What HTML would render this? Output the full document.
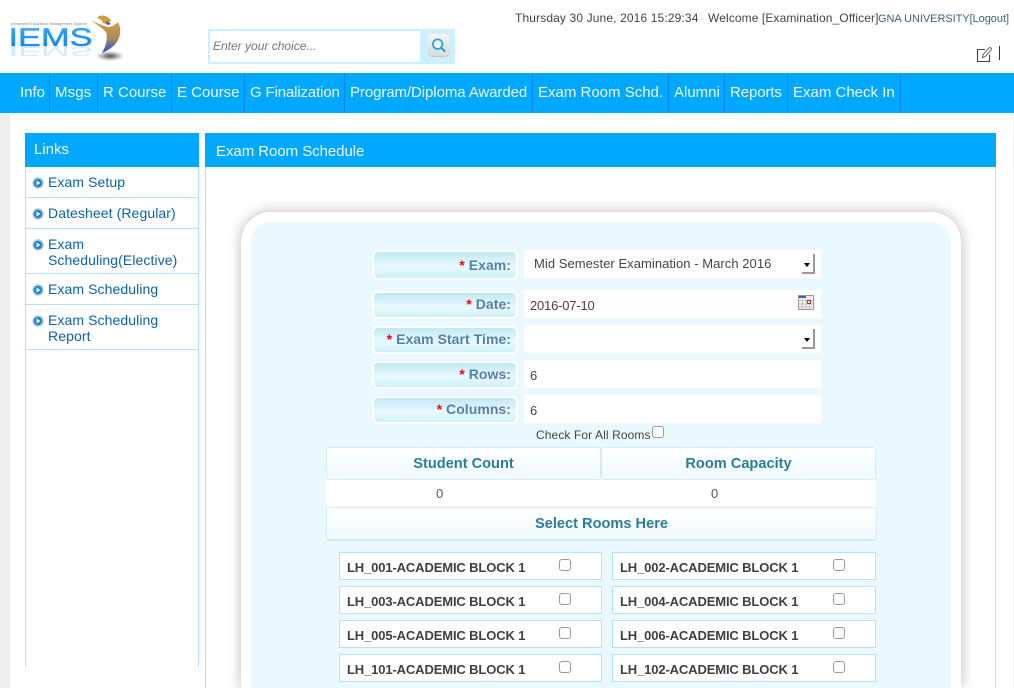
<!DOCTYPE html>
<html>
<head>
<meta charset="utf-8">
<style>
html,body{margin:0;padding:0;background:#fff;width:1014px;height:688px;overflow:hidden;}
#w{width:1014px;height:688px;overflow:hidden;position:relative;font-family:"Liberation Sans",sans-serif;color:#444;background:#fff;}
.a{position:absolute;box-sizing:border-box;}
.nav{left:0;top:73px;width:1014px;height:40px;background:#00a8ff;}
.nl{position:absolute;top:0;height:40px;width:1px;background:#0a82f0;}
.nt{position:absolute;top:0;line-height:39px;font-size:15px;color:#f2faff;white-space:nowrap;}
.sep{left:26px;width:172px;height:1px;background:#b5e0fb;}
.lnk{left:48px;width:148px;font-size:14px;line-height:16px;color:#0b62ad;letter-spacing:.09px;white-space:nowrap;}
.bul{left:32px;width:12px;height:12px;}
.lab{left:372px;width:146px;border:2px solid #fff;border-radius:6px;background:linear-gradient(#c2e8f2,#e9f9ff 55%,#d0f0f8);text-align:right;padding-right:5px;font-size:14px;font-weight:bold;color:#5480a8;letter-spacing:.05px;}
.lab b{color:#f00;}
.inp{left:524px;width:297px;height:28px;background:#fff;font-size:13px;color:#444;line-height:32px;}
.sel{position:absolute;left:278px;top:4px;width:13px;height:20px;background:#fff;border-right:2px solid #999;border-bottom:2px solid #999;box-sizing:border-box;}
.sel:after{content:"";position:absolute;left:2px;top:9px;border-left:3.5px solid transparent;border-right:3.5px solid transparent;border-top:4px solid #000;}
.hd{background:linear-gradient(#fff,#f0faff);border:1px solid #d4ebf5;border-radius:3px;font-size:14.6px;font-weight:bold;color:#2a7f96;text-align:center;}
.room{height:28px;background:#fff;border:1px solid #aee3fb;font-size:13px;font-weight:bold;color:#3f3f46;line-height:29px;padding-left:7px;letter-spacing:-.13px;}
.cb{width:12px;height:12px;background:#fff;border:1px solid #999;border-radius:3px;}
</style>
</head>
<body>
<div id="w">
<!-- logo -->
<svg class="a" style="left:0;top:0" width="140" height="72" viewBox="0 0 140 72">
<defs>
<linearGradient id="g1" x1="0" y1="0" x2="0" y2="1"><stop offset="0" stop-color="#38b4ff"/><stop offset="1" stop-color="#0a78f0"/></linearGradient>
<linearGradient id="g2" x1="0" y1="0" x2="0" y2="1"><stop offset="0" stop-color="#d9a24a"/><stop offset=".55" stop-color="#a98a5c"/><stop offset="1" stop-color="#2050d8"/></linearGradient>
<radialGradient id="g3"><stop offset="0" stop-color="#555"/><stop offset="1" stop-color="#fff"/></radialGradient>
</defs>
<text x="11" y="25" font-size="4" fill="#7a8a99" textLength="76" lengthAdjust="spacingAndGlyphs" font-family="Liberation Sans">Integrated Education Management System</text>
<text x="8.500" y="46" font-size="25" fill="url(#g1)" stroke="#1a90ff" stroke-width=".4" textLength="84" lengthAdjust="spacingAndGlyphs" font-family="Liberation Sans">IEMS</text>
<g opacity=".2" transform="translate(0,47) scale(1,-.5)"><text x="8.500" y="0" font-size="25" fill="#2a9cff" textLength="84" lengthAdjust="spacingAndGlyphs" font-family="Liberation Sans">IEMS</text></g>
<ellipse cx="110" cy="56" rx="14" ry="5" fill="url(#g3)"/>
<path d="M91 20 C97 23 103 26 108 27 C112 27 115 25 118 22 C121 28 121 35 118 40 C115 46 109 50 102 53 C106 46 108 38 106 32 C102 28 96 24 91 20Z" fill="url(#g2)"/>
<path d="M97 18 C100 14 106 15 111 20 C110 24 106 25 103 23 C102 20 100 19 97 18Z" fill="#d49a3c"/>
<path d="M106 21 L111 24 L107 25Z" fill="#2a50c0"/>
</svg>

<!-- search -->
<div class="a" style="left:208px;top:29px;width:247px;height:35px;background:#ccf0ff;"></div>
<div class="a" style="left:210px;top:31px;width:210px;height:31px;background:#fff;font-size:12px;font-style:italic;color:#757575;line-height:30px;padding-left:3px;">Enter your choice...</div>
<div class="a" style="left:427px;top:34px;width:23px;height:23px;border-radius:6px;background:linear-gradient(#f4f6f6,#d8dcdc);border-bottom:1px solid #c4c8c8;"></div>
<svg class="a" style="left:427px;top:34px" width="23" height="23" viewBox="0 0 23 23"><circle cx="10.700" cy="10.200" r="4.800" fill="#eef8fc" stroke="#2a9fd8" stroke-width="1.700"/><path d="M14.200 13.700 L17.500 17" stroke="#2a9fd8" stroke-width="2.200" stroke-linecap="round"/></svg>

<!-- top right -->
<div class="a" style="left:515px;top:11px;font-size:12px;line-height:14px;color:#444;white-space:nowrap;letter-spacing:.13px;">Thursday 30 June, 2016 15:29:34</div>
<div class="a" style="left:708px;top:11px;font-size:12px;line-height:14px;color:#444;white-space:nowrap;letter-spacing:.1px;">Welcome [Examination_Officer]</div>
<div class="a" style="left:878px;top:12px;font-size:11px;line-height:14px;color:#3f5f80;white-space:nowrap;letter-spacing:-.05px;">GNA UNIVERSITY[Logout]</div>
<svg class="a" style="left:976px;top:46px" width="17" height="17" viewBox="0 0 17 17"><path d="M9 3.500 H1.500 V15.500 H13.500 V8.500" fill="none" stroke="#444" stroke-width="1.100"/><path d="M6.500 11.500 L7.200 8.400 L13 2 C13.600 1.400 14.400 1.500 15 2 C15.600 2.600 15.600 3.400 15 4 L9.200 10.600Z" fill="none" stroke="#666" stroke-width="1"/></svg>
<div class="a" style="left:999px;top:46px;width:1px;height:14px;background:#333;"></div>

<!-- nav -->
<div class="a nav">
<span class="nl" style="left:49px"></span><span class="nl" style="left:97px"></span><span class="nl" style="left:171px"></span><span class="nl" style="left:244px"></span><span class="nl" style="left:344px"></span><span class="nl" style="left:532px"></span><span class="nl" style="left:668px"></span><span class="nl" style="left:724px"></span><span class="nl" style="left:787px"></span><span class="nl" style="left:900px"></span>
<span class="nt" style="left:20px">Info</span>
<span class="nt" style="left:55px;letter-spacing:.15px">Msgs</span>
<span class="nt" style="left:103px">R Course</span>
<span class="nt" style="left:177px">E Course</span>
<span class="nt" style="left:250px;letter-spacing:-.14px">G Finalization</span>
<span class="nt" style="left:350px;letter-spacing:-.08px">Program/Diploma Awarded</span>
<span class="nt" style="left:538px">Exam Room Schd.</span>
<span class="nt" style="left:674px">Alumni</span>
<span class="nt" style="left:730px;letter-spacing:-.1px">Reports</span>
<span class="nt" style="left:793px">Exam Check In</span>
</div>

<!-- page edges -->
<div class="a" style="left:0;top:113px;width:10px;height:575px;background:#eee;"></div>
<div class="a" style="left:1013px;top:113px;width:1px;height:575px;background:#eee;"></div>

<!-- sidebar -->
<div class="a" style="left:25px;top:167px;width:174px;height:500px;border-left:1px solid #b5e0fb;border-right:1px solid #b5e0fb;"></div>
<div class="a" style="left:25px;top:133px;width:174px;height:34px;background:#00a8ff;color:#f2faff;font-size:15px;line-height:33px;padding-left:9px;">Links</div>
<svg class="a bul" style="top:177px" viewBox="0 0 12 12"><circle cx="6" cy="6" r="5.700" fill="#b9c6ce"/><circle cx="6" cy="6" r="4.300" fill="#1c8ad0"/><path d="M4.600 3.600 L8.400 6 L4.600 8.400Z" fill="#fff"/></svg><div class="a lnk" style="top:174px">Exam Setup</div>
<div class="a sep" style="top:197px"></div>
<svg class="a bul" style="top:208px" viewBox="0 0 12 12"><circle cx="6" cy="6" r="5.700" fill="#b9c6ce"/><circle cx="6" cy="6" r="4.300" fill="#1c8ad0"/><path d="M4.600 3.600 L8.400 6 L4.600 8.400Z" fill="#fff"/></svg><div class="a lnk" style="top:205px">Datesheet (Regular)</div>
<div class="a sep" style="top:228px"></div>
<svg class="a bul" style="top:239px" viewBox="0 0 12 12"><circle cx="6" cy="6" r="5.700" fill="#b9c6ce"/><circle cx="6" cy="6" r="4.300" fill="#1c8ad0"/><path d="M4.600 3.600 L8.400 6 L4.600 8.400Z" fill="#fff"/></svg><div class="a lnk" style="top:236px">Exam<br>Scheduling(Elective)</div>
<div class="a sep" style="top:273px"></div>
<svg class="a bul" style="top:284px" viewBox="0 0 12 12"><circle cx="6" cy="6" r="5.700" fill="#b9c6ce"/><circle cx="6" cy="6" r="4.300" fill="#1c8ad0"/><path d="M4.600 3.600 L8.400 6 L4.600 8.400Z" fill="#fff"/></svg><div class="a lnk" style="top:281px">Exam Scheduling</div>
<div class="a sep" style="top:304px"></div>
<svg class="a bul" style="top:315px" viewBox="0 0 12 12"><circle cx="6" cy="6" r="5.700" fill="#b9c6ce"/><circle cx="6" cy="6" r="4.300" fill="#1c8ad0"/><path d="M4.600 3.600 L8.400 6 L4.600 8.400Z" fill="#fff"/></svg><div class="a lnk" style="top:312px">Exam Scheduling<br>Report</div>
<div class="a sep" style="top:349px"></div>

<!-- main -->
<div class="a" style="left:205px;top:167px;width:791px;height:521px;border-left:1px solid #b5e0fb;border-right:1px solid #b5e0fb;"></div>
<div class="a" style="left:205px;top:133px;width:791px;height:34px;background:#00a8ff;color:#f2faff;font-size:15px;line-height:37px;padding-left:11px;letter-spacing:-.05px;">Exam Room Schedule</div>

<!-- card, cut off by the frame bottom as in the reference -->
<div class="a" style="left:206px;top:170px;width:789px;height:518px;overflow:hidden;">
<div class="a" style="left:35px;top:42px;width:720px;height:476px;background:#fff;border-radius:30px 30px 0 0;box-shadow:0 0 14px rgba(0,0,0,.28);"></div>
<div class="a" style="left:45px;top:52px;width:700px;height:466px;background:#e9f9ff;border-radius:20px 20px 0 0;"></div>
</div>

<div class="a lab" style="top:250px;height:30px;line-height:26px;"><b>*</b> Exam:</div>
<div class="a lab" style="top:291px;height:28px;line-height:22px;"><b>*</b> Date:</div>
<div class="a lab" style="top:326px;height:28px;line-height:22px;"><b>*</b> Exam Start Time:</div>
<div class="a lab" style="top:361px;height:28px;line-height:22px;"><b>*</b> Rows:</div>
<div class="a lab" style="top:396px;height:28px;line-height:22px;"><b>*</b> Columns:</div>

<div class="a inp" style="top:250px;padding-left:10px;line-height:27px;letter-spacing:.05px;">Mid Semester Examination - March 2016<span class="sel"></span></div>
<div class="a inp" style="top:290px;padding-left:6px;letter-spacing:-.2px;">2016-07-10
<svg style="position:absolute;left:274px;top:5px" width="16" height="15" viewBox="0 0 16 15"><rect x=".5" y=".5" width="15" height="14" fill="#f2f2f2" stroke="#999"/><rect x="1" y="1" width="7" height="2" fill="#5058b8"/><path d="M1 5.500H15M1 9H15M1 12H15M4.500 4V14M8 4V14M11.500 4V14" stroke="#c4c4c4" stroke-width="1"/><rect x="9.500" y="5.500" width="3" height="3" fill="#fff" stroke="#b03030"/></svg></div>
<div class="a inp" style="top:325px"><span class="sel"></span></div>
<div class="a inp" style="top:360px;padding-left:6px;">6</div>
<div class="a inp" style="top:395px;padding-left:6px;">6</div>

<div class="a" style="left:536px;top:428px;font-size:12px;line-height:14px;color:#444;white-space:nowrap;letter-spacing:.1px;">Check For All Rooms</div>
<div class="a cb" style="left:652px;top:426px"></div>

<div class="a hd" style="left:326px;top:447px;width:275px;height:33px;line-height:33px;">Student Count</div>
<div class="a hd" style="left:601px;top:447px;width:275px;height:33px;line-height:33px;">Room Capacity</div>
<div class="a" style="left:326px;top:480px;width:550px;height:27px;background:#fff;font-size:13px;line-height:27px;">
<span style="position:absolute;left:110px;color:#555">0</span><span style="position:absolute;left:385px;color:#555">0</span></div>
<div class="a hd" style="left:326px;top:507px;width:551px;height:34px;line-height:33px;border-bottom:2px solid #d4ebf5;">Select Rooms Here</div>

<div class="a room" style="left:339px;top:552px;width:263px;">LH_001-ACADEMIC BLOCK 1</div>
<div class="a room" style="left:612px;top:552px;width:264px;">LH_002-ACADEMIC BLOCK 1</div>
<div class="a room" style="left:339px;top:586px;width:263px;">LH_003-ACADEMIC BLOCK 1</div>
<div class="a room" style="left:612px;top:586px;width:264px;">LH_004-ACADEMIC BLOCK 1</div>
<div class="a room" style="left:339px;top:620px;width:263px;">LH_005-ACADEMIC BLOCK 1</div>
<div class="a room" style="left:612px;top:620px;width:264px;">LH_006-ACADEMIC BLOCK 1</div>
<div class="a room" style="left:339px;top:654px;width:263px;">LH_101-ACADEMIC BLOCK 1</div>
<div class="a room" style="left:612px;top:654px;width:264px;">LH_102-ACADEMIC BLOCK 1</div>
<div class="a cb" style="left:559px;top:559px"></div><div class="a cb" style="left:833px;top:559px"></div>
<div class="a cb" style="left:559px;top:593px"></div><div class="a cb" style="left:833px;top:593px"></div>
<div class="a cb" style="left:559px;top:627px"></div><div class="a cb" style="left:833px;top:627px"></div>
<div class="a cb" style="left:559px;top:661px"></div><div class="a cb" style="left:833px;top:661px"></div>
</div>
</body>
</html>
